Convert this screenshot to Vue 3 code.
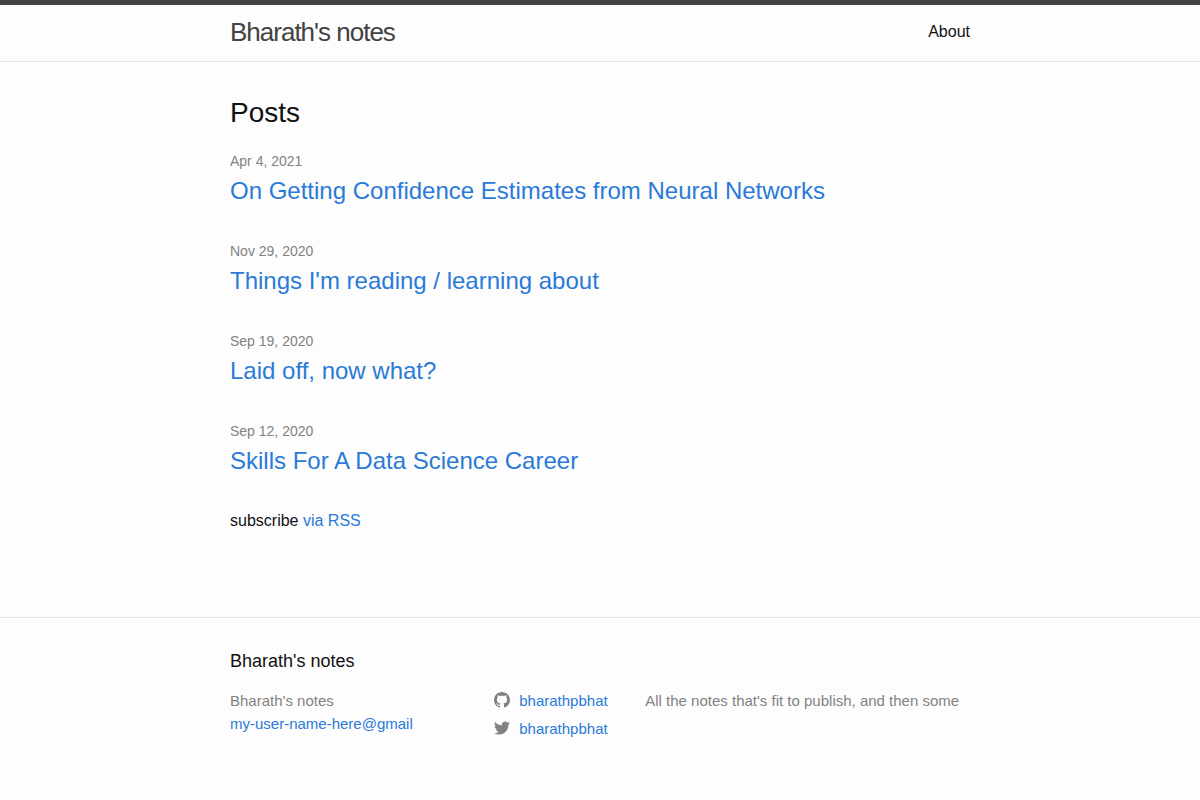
<script setup>
const posts = [
  { date: 'Apr 4, 2021', title: 'On Getting Confidence Estimates from Neural Networks' },
  { date: 'Nov 29, 2020', title: "Things I'm reading / learning about" },
  { date: 'Sep 19, 2020', title: 'Laid off, now what?' },
  { date: 'Sep 12, 2020', title: 'Skills For A Data Science Career' }
]
const socials = [
  {
    name: 'github',
    user: 'bharathpbhat',
    path: 'M8 0C3.58 0 0 3.582 0 8c0 3.535 2.292 6.533 5.47 7.59.4.075.547-.172.547-.385 0-.19-.007-.693-.01-1.36-2.226.483-2.695-1.073-2.695-1.073-.364-.924-.89-1.17-.89-1.17-.725-.496.056-.486.056-.486.803.056 1.225.824 1.225.824.714 1.223 1.873.87 2.33.665.072-.517.278-.87.507-1.07-1.777-.2-3.644-.888-3.644-3.953 0-.873.31-1.587.823-2.147-.083-.202-.358-1.015.077-2.117 0 0 .672-.215 2.2.82.638-.178 1.323-.266 2.003-.27.68.004 1.364.092 2.003.27 1.527-1.035 2.198-.82 2.198-.82.437 1.102.163 1.915.08 2.117.513.56.823 1.274.823 2.147 0 3.073-1.87 3.75-3.653 3.947.287.246.543.735.543 1.48 0 1.07-.01 1.933-.01 2.195 0 .215.144.463.55.385C13.71 14.53 16 11.534 16 8c0-4.418-3.582-8-8-8'
  },
  {
    name: 'twitter',
    user: 'bharathpbhat',
    path: 'M16 3.038c-.59.26-1.22.437-1.885.517.677-.407 1.198-1.05 1.443-1.816-.634.37-1.337.64-2.085.79-.598-.64-1.45-1.04-2.396-1.04-1.812 0-3.282 1.47-3.282 3.28 0 .26.03.51.085.75-2.728-.13-5.147-1.44-6.766-3.42C.83 2.58.67 3.14.67 3.75c0 1.14.58 2.143 1.46 2.732-.538-.017-1.045-.165-1.487-.41v.04c0 1.59 1.13 2.918 2.633 3.22-.276.074-.566.114-.865.114-.21 0-.41-.02-.61-.058.42 1.304 1.63 2.253 3.07 2.28-1.12.88-2.54 1.404-4.07 1.404-.26 0-.52-.015-.78-.045 1.46.93 3.18 1.474 5.04 1.474 6.04 0 9.34-5 9.34-9.33 0-.14 0-.28-.01-.42.64-.46 1.2-1.04 1.64-1.7z'
  }
]
</script>

<template>
  <div class="page">
    <header class="site-header">
      <div class="wrapper header-row">
        <a class="site-title" href="#">Bharath's notes</a>
        <nav><a class="page-link" href="#about">About</a></nav>
      </div>
    </header>

    <main class="wrapper content">
      <h2 class="list-heading">Posts</h2>
      <ul class="post-list">
        <li v-for="post in posts" :key="post.title">
          <span class="post-meta">{{ post.date }}</span>
          <h3><a href="#post">{{ post.title }}</a></h3>
        </li>
      </ul>
      <p class="subscribe">subscribe <a href="#feed">via RSS</a></p>
    </main>

    <footer class="site-footer">
      <div class="wrapper">
        <h2 class="footer-heading">Bharath's notes</h2>
        <div class="footer-cols">
          <ul class="contact">
            <li>Bharath's notes</li>
            <li><a href="#mail">my-user-name-here@gmail</a></li>
          </ul>
          <ul class="social">
            <li v-for="s in socials" :key="s.name">
              <a href="#social">
                <svg viewBox="0 0 16 16" aria-hidden="true"><path :d="s.path" /></svg>
                <span>{{ s.user }}</span>
              </a>
            </li>
          </ul>
          <p class="about">All the notes that's fit to publish, and then some</p>
        </div>
      </div>
    </footer>
  </div>
</template>

<style>
body {
  background: #fdfdfd;
}
</style>

<style scoped>
.page {
  min-height: 100vh;
  display: flex;
  flex-direction: column;
  color: #111;
  font: 400 16px/24px "Liberation Sans", Arial, sans-serif;
}
h2, h3, p, ul {
  margin: 0;
  padding: 0;
  font-weight: 400;
}
ul {
  list-style: none;
}
a {
  color: #2a7ad8;
  text-decoration: none;
}
a:hover {
  text-decoration: underline;
}
.wrapper {
  box-sizing: border-box;
  width: 100%;
  max-width: 800px;
  margin: 0 auto;
  padding: 0 30px;
}
.site-header {
  border-top: 5px solid #424242;
  border-bottom: 1px solid #e8e8e8;
}
.header-row {
  display: flex;
  justify-content: space-between;
  line-height: 54px;
  min-height: 56px;
}
.site-title {
  color: #424242;
  font-size: 26px;
  letter-spacing: -1px;
}
.header-row .page-link {
  color: #111;
}
.content {
  flex: 1 0 auto;
  padding-top: 30px;
  padding-bottom: 30px;
}
.list-heading {
  font-size: 28px;
  line-height: 42px;
  margin-bottom: 15px;
}
.post-list li {
  margin-bottom: 30px;
}
.post-meta {
  display: block;
  color: #828282;
  font-size: 14px;
  line-height: 24px;
}
.post-list h3 {
  font-size: 24px;
  line-height: 36px;
}
.site-footer {
  border-top: 1px solid #e8e8e8;
  padding: 30px 0 55px;
}
.footer-heading {
  font-size: 18px;
  line-height: 27px;
  margin-bottom: 14px;
}
.footer-cols {
  display: grid;
  grid-template-columns: 35fr 20fr 45fr;
  margin-right: -15px;
  color: #828282;
  font-size: 15px;
  line-height: 23px;
}
.social li {
  margin-bottom: 5px;
}
.social a {
  display: flex;
  gap: 9px;
}
.social svg {
  width: 16px;
  height: 16px;
  margin-top: 3px;
  fill: #828282;
}
</style>
